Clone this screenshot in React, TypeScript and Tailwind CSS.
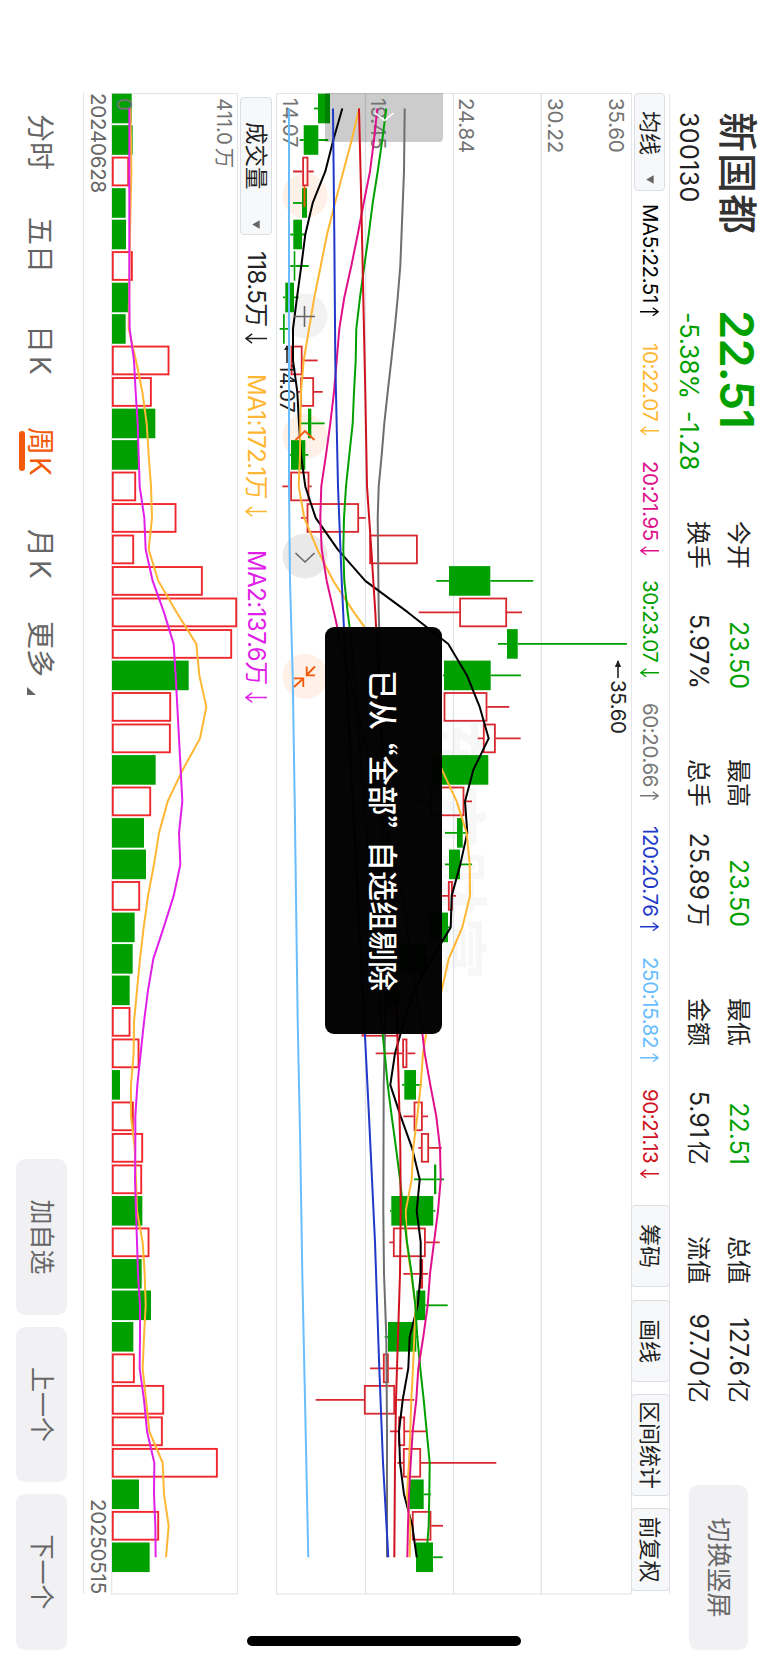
import type { ReactNode } from "react"

type Candle = [up: 0 | 1, low: number, from: number, to: number, high: number, volume: number]

const STEP = 31.495
const BODY = 29.6
const GREEN = "#00a000"
const RED = "#d7282f"

// prices and volumes are already scaled to screen units
const candles: Candle[] = [
  [0, 314, 318, 330, 330, 395],
  [0, 299.7, 303.7, 318.3, 328.3, 398],
  [1, 293, 302.3, 308.3, 313.7, 387],
  [0, 293, 302, 307, 307, 377],
  [0, 290.3, 293.3, 302, 305.3, 378],
  [1, 290.3, 293.7, 295.3, 308.7, 398],
  [0, 283, 285.3, 294, 298.7, 384],
  [0, 279.7, 283, 284.7, 290, 377],
  [1, 290.7, 290.7, 302.5, 317.7, 508],
  [1, 297.3, 300.3, 314, 322.7, 455],
  [0, 301, 308, 311.3, 324.7, 466],
  [0, 290, 291, 305.3, 308.3, 416],
  [1, 282.3, 290.3, 309.3, 311.7, 408],
  [1, 301, 306.7, 359, 365.7, 529],
  [1, 369.3, 369.3, 417.7, 417.7, 402],
  [0, 436.3, 449, 490.3, 533.3, 608],
  [1, 418.7, 459.3, 507, 522, 711],
  [0, 498, 507, 517.7, 627, 696],
  [0, 443, 444, 490.7, 521, 566],
  [1, 443.7, 443.7, 487.3, 509.3, 513],
  [1, 477.7, 483, 495.7, 520.7, 512],
  [0, 431.7, 431.7, 488.3, 488.3, 467],
  [1, 416.7, 430, 464.3, 472, 453],
  [0, 445, 457, 462.7, 466, 432],
  [0, 445, 449, 460, 472, 438],
  [1, 424, 448, 452.7, 456, 420],
  [0, 429, 429, 448, 450, 404],
  [0, 395, 397, 427, 430, 398],
  [0, 383, 385, 400, 405, 389],
  [1, 361.7, 361.7, 398.3, 398.3, 391],
  [1, 375.7, 402.3, 407.3, 415.3, 418],
  [0, 402, 404.3, 416, 421.7, 360],
  [1, 403.3, 413.7, 422.7, 428, 401],
  [1, 418.3, 421, 429, 441.7, 429],
  [0, 414, 434, 436.3, 444, 426],
  [0, 390, 391.3, 433.3, 435.3, 427],
  [1, 389.3, 393, 425.7, 439.7, 448],
  [1, 403.3, 419.7, 423, 428, 425],
  [0, 416.3, 416.3, 425.3, 447.7, 453],
  [0, 384.7, 388, 416.3, 418.3, 400],
  [1, 370, 383, 388.7, 402.7, 404],
  [1, 315.7, 364, 395, 414.3, 492],
  [1, 390, 398.3, 405, 426.7, 488],
  [1, 397.3, 403, 421, 496.3, 653],
  [0, 408, 409.3, 423.7, 430.7, 417],
  [1, 412, 412, 431.3, 443, 477],
  [0, 416, 416, 433, 442.7, 449],
]

const risingVolume = [2, 5, 8, 9, 12, 13, 14, 15, 16, 17, 19, 20, 22, 25, 29, 30, 32, 33, 34, 36, 40, 41, 42, 43, 45]
const fallingCandle = [5]

const averages: { color: string; points: [number, number][] }[] = [
  { color: "#6e6e6e", points: [[0, 404.7], [2, 404], [5, 400.3], [6, 397.7], [7, 394.7], [8, 391.3], [9, 387.7], [10, 384.3], [11, 381.7], [12, 378.7], [13, 377.7], [16, 378.7], [17, 379.7], [29, 385.3], [31, 383.7], [35, 383.3], [37, 384], [39, 386.3], [42, 387], [46, 387]] },
  { color: "#68bdff", points: [[0, 289], [12, 289], [15, 290], [18, 292.7], [22, 294.7], [29, 297.7], [33, 300.3], [37, 302.3], [41, 305], [46, 308.3]] },
  { color: "#000000", points: [[0, 342.3], [1, 333.3], [2, 325.3], [3, 312.7], [4, 305.3], [5, 301.3], [6, 297], [7, 293], [8, 293], [9, 297.3], [10, 299], [11, 301], [12, 305.3], [13, 315.7], [14, 337.7], [15, 365.3], [16, 408], [17, 448.3], [18, 467], [19, 479.7], [20, 488.7], [21, 473.3], [22, 465], [23, 467.3], [24, 460.3], [25, 451.7], [26, 450.7], [27, 431.7], [28, 414], [29, 404], [30, 395], [31, 390.3], [32, 400.7], [33, 412], [34, 419.7], [35, 416.7], [36, 420.7], [37, 420.7], [38, 417.7], [39, 409.7], [40, 408.3], [41, 402.7], [42, 399], [43, 400], [44, 404], [45, 412.3], [46, 416.7]] },
  { color: "#ffb733", points: [[0, 359.3], [1, 351.7], [2, 343.3], [3, 335], [4, 327], [5, 320.7], [6, 314.3], [7, 309], [8, 303.7], [9, 301], [10, 300.3], [11, 300], [12, 298.7], [13, 304.3], [14, 317.3], [15, 333.3], [16, 354], [17, 376.7], [18, 390], [19, 408.3], [20, 426.7], [21, 442], [22, 456.7], [23, 466.7], [24, 469.7], [25, 470], [26, 462.3], [27, 448.7], [28, 441.7], [29, 428], [30, 423], [31, 420.7], [32, 417.3], [33, 413.3], [34, 411.7], [35, 405.7], [36, 406.7], [37, 411], [38, 415.7], [39, 414.3], [40, 413], [41, 411.3], [42, 410.3], [43, 409], [44, 407], [45, 410.3], [46, 409.7]] },
  { color: "#00a000", points: [[0, 386.3], [1, 382.3], [2, 377.7], [3, 372.7], [4, 368.7], [5, 364.3], [6, 360], [7, 356.3], [8, 355.7], [9, 354], [10, 352.7], [11, 349.3], [12, 346], [13, 344], [14, 343.3], [15, 344.3], [16, 347.7], [17, 351.7], [29, 381.3], [30, 384.7], [31, 387.7], [32, 391.7], [33, 396], [34, 400], [35, 403.3], [36, 407], [37, 411.7], [38, 415.3], [39, 417.3], [40, 420.3], [41, 423.7], [42, 426.7], [43, 429.7], [44, 429.3], [45, 428.7], [46, 426.3]] },
  { color: "#e0108c", points: [[0, 377.3], [1, 374], [2, 370], [3, 363.7], [4, 357.7], [5, 351.3], [6, 344.3], [7, 339.3], [8, 336.7], [9, 334], [10, 330.3], [11, 326], [12, 321.3], [13, 320.3], [14, 321.7], [15, 326.7], [16, 334], [17, 341], [25, 403], [27, 411], [29, 421], [30, 424.7], [31, 430.3], [32, 436.3], [33, 440], [34, 440.7], [35, 438], [36, 434], [37, 430], [38, 427.7], [39, 423.3], [40, 418.3], [41, 416.3], [42, 412.7], [43, 410.7], [44, 409], [45, 408], [46, 407.3]] },
  { color: "#2039c8", points: [[0, 333], [4, 334.3], [8, 335.3], [12, 338], [15, 341.7], [17, 344.7], [29, 364.3], [32, 369], [36, 375], [40, 379.3], [43, 383], [46, 388.3]] },
  { color: "#d0121f", points: [[0, 359], [3, 361.3], [6, 363.3], [9, 365.3], [12, 367], [14, 371.3], [16, 375.3], [17, 377], [29, 397], [31, 398.7], [33, 400.3], [35, 400.7], [37, 400], [39, 398], [41, 396], [43, 395], [46, 394.3]] },
]

const volumeMa1 = [391, 393, 394, 392, 390, 389, 387, 386, 408, 427, 440, 446, 453, 456, 446, 475, 530, 589, 598, 619, 600, 548, 503, 477, 462, 444, 431, 420, 411, 402, 401, 393, 393, 404, 408, 411, 428, 434, 437, 432, 428, 438, 448, 488, 492, 506, 498]
const volumeMa2 = [388, 388, 388, 388, 388, 388, 388, 389, 402, 407, 413, 416, 419, 433, 437, 458, 492, 521, 527, 532, 537, 542, 547, 537, 541, 521, 491, 460, 444, 432, 422, 412, 406, 406, 405, 408, 411, 414, 420, 420, 419, 432, 441, 463, 462, 466, 467]

const cx = (i: number) => 15.5 + i * STEP
const py = (v: number) => 631 - v
const vy = (v: number) => 238 - v / 3

function Arrow({ down, size = 19 }: { down?: boolean; size?: number }) {
  return (
    <svg width={size / 2} height={size} viewBox="0 0 10 20" fill="none" stroke="currentColor" strokeWidth="1.4" className={down ? "shrink-0 rotate-180" : "shrink-0"}>
      <path d="M5 0.8V20M0.8 6.5L5 0.8L9.2 6.5" />
    </svg>
  )
}

function Caret() {
  return (
    <svg width="9" height="8" viewBox="0 0 9 8">
      <path d="M0.3 0.3H8.7L4.5 7.8Z" fill="#666" />
    </svg>
  )
}

function Stat({ label, value, unit, green, className }: { label: string; value: string; unit?: string; green?: boolean; className: string }) {
  return (
    <div className={`flex h-[40px] items-center justify-between ${className}`}>
      <span className="text-[24px]">{label}</span>
      <span className={green ? "text-[25px] text-[#00a000]" : "text-[25px]"}>
        {value}
        {unit && <span className="ml-[3px] text-[24px]">{unit}</span>}
      </span>
    </div>
  )
}

function Header() {
  return (
    <header className="flex h-[98px] shrink-0 pl-[112px] text-[#222]">
      <div className="w-[198px]">
        <div className="flex h-[62px] items-center text-[40px] font-medium tracking-[1px] text-[#333]">新国都</div>
        <div className="flex h-[36px] items-center text-[25px] tracking-[0.4px]">300130</div>
      </div>
      <div className="w-[211px] text-[#00a000]">
        <div className="flex h-[62px] items-center text-[47px] font-semibold tracking-[-0.9px]">22.51</div>
        <div className="flex h-[36px] items-center pl-[2px] text-[25px]">
          <span className="w-[99px] tracking-[-0.2px]">-5.38%</span>
          <span>-1.28</span>
        </div>
      </div>
      <div className="w-[238px] pt-[10px]">
        <Stat label="今开" value="23.50" green className="w-[168px]" />
        <Stat label="换手" value="5.97%" className="w-[168px]" />
      </div>
      <div className="w-[239px] pt-[10px]">
        <Stat label="最高" value="23.50" green className="w-[168px]" />
        <Stat label="总手" value="25.89" unit="万" className="w-[168px]" />
      </div>
      <div className="w-[238px] pt-[10px]">
        <Stat label="最低" value="22.51" green className="w-[167px]" />
        <Stat label="金额" value="5.91" unit="亿" className="w-[167px]" />
      </div>
      <div className="w-[249px] pt-[10px]">
        <Stat label="总值" value="127.6" unit="亿" className="w-[167px]" />
        <Stat label="流值" value="97.70" unit="亿" className="w-[167px]" />
      </div>
      <button className="mt-[20px] h-[59px] w-[165px] rounded-[9px] bg-[#f1f1f4] text-[25px] text-[#666]">切换竖屏</button>
    </header>
  )
}

const maItems = [
  { text: "MA5:22.51", cell: "w-[139px] text-black", label: "w-[103px]" },
  { text: "10:22.07", cell: "w-[118px] text-[#ffb733]", label: "w-[83px]", down: true },
  { text: "20:21.95", cell: "w-[119px] text-[#e0108c]", label: "w-[85px]", down: true },
  { text: "30:23.07", cell: "w-[123px] text-[#00a000]", label: "w-[88px]", down: true },
  { text: "60:20.66", cell: "w-[123px] text-[#777]", label: "w-[88px]" },
  { text: "120:20.76", cell: "w-[131px] text-[#2039c8]", label: "w-[96px]" },
  { text: "250:15.82", cell: "w-[132px] text-[#68bdff]", label: "w-[96px]" },
  { text: "90:21.13", cell: "w-[116px] text-[#d0121f]", label: "w-[80px]", down: true },
]

function ToolButton({ children, className }: { children: ReactNode; className: string }) {
  return (
    <button className={`h-[39px] shrink-0 rounded-[4px] border border-[#dcdee4] bg-[#f7f8fa] pt-px text-[22px] whitespace-nowrap text-[#222] ${className}`}>
      {children}
    </button>
  )
}

function AverageBar() {
  return (
    <div className="ml-[93px] flex h-[39px] w-[1501px] shrink-0 items-center border-y border-[#e3e5e9]">
      <button className="mt-px mr-[13px] flex h-[31px] w-[98px] shrink-0 items-center justify-between rounded-[4px] border border-[#dcdee4] bg-[#f7f8fa] pr-[6px] pl-[17px] text-[22px] text-[#222]">
        均线
        <Caret />
      </button>
      {maItems.map((m) => (
        <div key={m.text} className={`flex shrink-0 items-center pt-[2px] text-[20.5px] tracking-[-0.4px] ${m.cell}`}>
          <span className={m.label}>{m.text}</span>
          <Arrow down={m.down} />
        </div>
      ))}
      <ToolButton className="w-[82px]">筹码</ToolButton>
      <ToolButton className="ml-[13px] w-[82px]">画线</ToolButton>
      <ToolButton className="ml-[12px] w-[102px]">区间统计</ToolButton>
      <ToolButton className="ml-[12px] w-[83px]">前复权</ToolButton>
    </div>
  )
}

function PriceChart() {
  return (
    <svg width="1501" height="355" className="ml-[93px] block shrink-0 overflow-visible" fill="none">
      <text x="626" y="198" fontSize="63" fontWeight="700" letterSpacing="3" fill="#f7f7f7">东方财富</text>
      <path d="M0.5 0V355M1501 0V355M0 354.5H1501" stroke="#e2e4e8" strokeWidth="1.2" />
      <path d="M0 89.7H1501M0 177.5H1501M0 265.5H1501" stroke="#dfe3ea" strokeWidth="1.3" />

      <circle cx="102.7" cy="326" r="22.5" fill="#fff0e8" />
      <circle cx="223" cy="326" r="22.5" fill="#f2f2f2" />
      <circle cx="343.5" cy="326" r="22.5" fill="#fff0e8" />
      <circle cx="463" cy="326" r="22.5" fill="#e9e9e9" />
      <circle cx="583.5" cy="326" r="22.5" fill="#fff0e8" />

      {candles.map(([up, low, from, to, high], i) => {
        const x = cx(i)
        const rising = up === 1 && !fallingCandle.includes(i)
        const color = rising ? RED : GREEN
        return (
          <g key={i} stroke={color} strokeWidth="1.8">
            <path d={`M${x} ${py(low)}V${py(from)}M${x} ${py(to)}V${py(high)}`} />
            {rising ? (
              <rect x={x - BODY / 2 + 0.9} y={py(to) + 0.8} width={BODY - 1.8} height={Math.max(to - from - 1.6, 0.6)} />
            ) : (
              <rect x={x - BODY / 2} y={py(to)} width={BODY} height={to - from} fill={color} stroke="none" />
            )}
          </g>
        )
      })}

      <path d="M0 188V306H49V192Q49 188 45 188Z" fill="#000" fillOpacity="0.2" />

      <g fontSize="20.5" fill="#737373" letterSpacing="-0.2">
        <text x="5" y="22.5">35.60</text>
        <text x="5" y="83.5">30.22</text>
        <text x="5" y="172">24.84</text>
        <text x="5" y="260.5">19.45</text>
        <text x="5" y="348.5">14.07</text>
      </g>

      <g fontSize="20.5" fill="#222" letterSpacing="-0.4">
        <path d="M253 344H270" stroke="#222" strokeWidth="1.6" />
        <path d="M252 344L257 341V347Z" fill="#222" />
        <text x="271" y="351.5">14.07</text>
        <path d="M568 13H585" stroke="#222" strokeWidth="1.6" />
        <path d="M567 13L574 9.8V16.2Z" fill="#222" />
        <text x="587" y="20.5">35.60</text>
      </g>

      {averages.map((a) => (
        <polyline key={a.color} points={a.points.map(([i, v]) => `${cx(i)},${py(v)}`).join(" ")} stroke={a.color} strokeWidth="2" strokeLinejoin="round" />
      ))}

      <path d="M20 237.5L27.5 246.5L20 256" stroke="#fff" strokeWidth="1.6" />
      <g stroke="#f25a0a" strokeWidth="1.8">
        <path d="M93 326.5H114" />
        <path d="M347 316.5L338 326L347 335.5" />
        <path d="M573.5 316L582 324.3M573.5 324.3H582.3V316M594 337L585.5 327.7M585.3 337V327.7H594" />
      </g>
      <g stroke="#666" strokeWidth="1.6">
        <path d="M213 326.5H234M223.5 316V337" />
        <path d="M460 316.5L469 326L460 335.5" />
      </g>
    </svg>
  )
}

function VolumeBar() {
  return (
    <div className="ml-[97px] flex h-[38px] shrink-0 items-center pt-px text-[24px] tracking-[-0.55px]">
      <button className="flex h-[32px] w-[138px] items-center justify-between rounded-[4px] border border-[#dcdee4] bg-[#f7f8fa] pr-[5px] pl-[24px] text-[22.5px] tracking-normal text-[#222]">
        成交量
        <Caret />
      </button>
      <div className="ml-[16px] flex w-[123px] items-center gap-[6px] text-[#222]">
        118.5万
        <Arrow down size={22} />
      </div>
      <div className="flex w-[176px] items-center gap-[7px] text-[#ffb733]">
        MA1:172.1万
        <Arrow down size={22} />
      </div>
      <div className="flex items-center gap-[7px] text-[#e020e8]">
        MA2:137.6万
        <Arrow down size={22} />
      </div>
    </div>
  )
}

function VolumeChart() {
  return (
    <svg width="1501" height="126" className="ml-[93px] block shrink-0 overflow-visible" fill="none">
      <rect x="0.5" y="0.5" width="1500.5" height="125.8" stroke="#e2e4e8" strokeWidth="1.2" />
      {candles.map(([, , , , , v], i) => {
        const x = cx(i) - BODY / 2
        const h = (v - 336) / 3
        return risingVolume.includes(i) ? (
          <rect key={i} x={x + 0.9} y={vy(v) + 0.8} width={BODY - 1.8} height={h - 1.6} stroke="#f0282d" strokeWidth="1.9" />
        ) : (
          <rect key={i} x={x} y={vy(v)} width={BODY} height={h} fill={GREEN} />
        )
      })}
      <g fontSize="20.5" fill="#737373" letterSpacing="-0.2">
        <text x="5" y="21.5">
          411.0<tspan dx="3">万</tspan>
        </text>
        <text x="5" y="121.5">0</text>
      </g>
      <polyline points={volumeMa1.map((v, i) => `${cx(i)},${vy(v)}`).join(" ")} stroke="#ffb733" strokeWidth="2" />
      <polyline points={volumeMa2.map((v, i) => `${cx(i)},${vy(v)}`).join(" ")} stroke="#e020e8" strokeWidth="2" />
    </svg>
  )
}

function Footer() {
  return (
    <footer className="flex h-[83px] shrink-0 items-center pl-[114px] text-[28px] text-[#666]">
      <div className="flex items-center pt-[2px]">
        <span className="w-[103px]">分时</span>
        <span className="w-[108px]">五日</span>
        <span className="w-[102px]">
          日<span className="ml-[3px]">K</span>
        </span>
        <span className="relative w-[102px] text-[#f25a0a]">
          周<span className="ml-[2px]">K</span>
          <span className="absolute bottom-0 left-[4px] h-[6px] w-[40px] rounded-full bg-[#f25a0a]" />
        </span>
        <span className="w-[92px]">
          月<span className="ml-[3px]">K</span>
        </span>
        <span>更多</span>
        <svg width="8" height="9" viewBox="0 0 8 9" className="mt-[18px] ml-[10px]">
          <path d="M8 0V9H0Z" fill="#666" />
        </svg>
      </div>
      <div className="mr-[13px] ml-auto flex gap-[12px] text-[25px]">
        <button className="h-[51px] w-[156px] rounded-[9px] bg-[#f1f1f4] pt-px">加自选</button>
        <button className="h-[51px] w-[155px] rounded-[9px] bg-[#f1f1f4] pt-px">上一个</button>
        <button className="h-[51px] w-[156px] rounded-[9px] bg-[#f1f1f4] pt-px">下一个</button>
      </div>
    </footer>
  )
}

function Toast() {
  return (
    <div className="absolute top-[326px] left-[627px] flex h-[117px] w-[407px] items-center justify-center rounded-[9px] bg-black/98 pb-[3px] font-['Noto_Sans_CJK_SC',sans-serif] text-[30px] font-medium text-white">
      已从<span className="pl-[10.5px] [font-feature-settings:'halt']">“</span>全部<span className="pr-[10.5px] [font-feature-settings:'halt']">”</span>自选组剔除
    </div>
  )
}

export default function App() {
  return (
    <div className="h-[1663px] w-[768px] overflow-hidden bg-white">
      <div className="relative flex h-[768px] w-[1663px] origin-top-left translate-x-[768px] rotate-90 flex-col bg-white font-['Inter','Noto_Sans_CJK_SC',sans-serif]">
        <Header />
        <AverageBar />
        <PriceChart />
        <VolumeBar />
        <VolumeChart />
        <div className="ml-[93px] flex h-[29px] w-[1501px] shrink-0 items-center justify-between border-b border-[#e2e4e8] text-[20.5px] tracking-[-0.2px] text-[#666]">
          <span>20240628</span>
          <span>20250515</span>
        </div>
        <Footer />
        <Toast />
        <div className="absolute top-[247px] left-[1636px] h-[274px] w-[10px] rounded-full bg-black" />
      </div>
    </div>
  )
}
